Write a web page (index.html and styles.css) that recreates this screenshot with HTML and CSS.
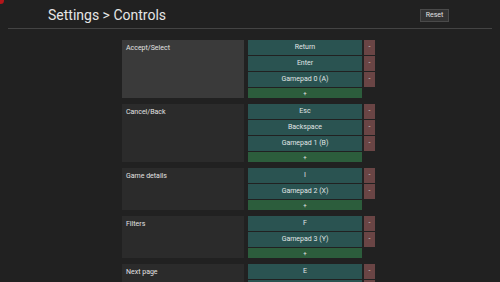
FILE: index.html
```html
<!DOCTYPE html>
<html>
<head>
<meta charset="utf-8">
<link rel="stylesheet" href="styles.css">
</head>
<body>
<div class="cursor-dot"></div>
<header class="header">
  <h1 class="title">Settings &gt; Controls</h1>
  <button class="reset">Reset</button>
</header>
<main class="list">
  <section class="row selected">
    <div class="label">Accept/Select</div>
    <div class="keys">
      <div class="bind"><div class="key">Return</div><div class="minus">-</div></div>
      <div class="bind"><div class="key">Enter</div><div class="minus">-</div></div>
      <div class="bind"><div class="key">Gamepad 0 (A)</div><div class="minus">-</div></div>
      <div class="bind"><div class="plus">+</div></div>
    </div>
  </section>
  <section class="row">
    <div class="label">Cancel/Back</div>
    <div class="keys">
      <div class="bind"><div class="key">Esc</div><div class="minus">-</div></div>
      <div class="bind"><div class="key">Backspace</div><div class="minus">-</div></div>
      <div class="bind"><div class="key">Gamepad 1 (B)</div><div class="minus">-</div></div>
      <div class="bind"><div class="plus">+</div></div>
    </div>
  </section>
  <section class="row">
    <div class="label">Game details</div>
    <div class="keys">
      <div class="bind"><div class="key">I</div><div class="minus">-</div></div>
      <div class="bind"><div class="key">Gamepad 2 (X)</div><div class="minus">-</div></div>
      <div class="bind"><div class="plus">+</div></div>
    </div>
  </section>
  <section class="row">
    <div class="label">Filters</div>
    <div class="keys">
      <div class="bind"><div class="key">F</div><div class="minus">-</div></div>
      <div class="bind"><div class="key">Gamepad 3 (Y)</div><div class="minus">-</div></div>
      <div class="bind"><div class="plus">+</div></div>
    </div>
  </section>
  <section class="row">
    <div class="label">Next page</div>
    <div class="keys">
      <div class="bind"><div class="key">E</div><div class="minus">-</div></div>
      <div class="bind"><div class="key"></div><div class="minus"></div></div>
    </div>
  </section>
</main>
</body>
</html>
```
FILE: styles.css
```css
html, body {
  margin: 0;
  padding: 0;
  background: #212121;
  color: #e2e2e2;
  font-family: Roboto, "Noto Sans", sans-serif;
}
body {
  position: relative;
  overflow: hidden;
  height: 282px;
}
.cursor-dot {
  position: absolute;
  left: -3px;
  top: -3px;
  width: 7px;
  height: 7px;
  border-radius: 50%;
  background: #b3161a;
}
.header {
  margin: 0 8px;
  height: 28px;
  border-bottom: 1px solid #444;
  display: flex;
  align-items: center;
  justify-content: space-between;
  padding: 0 43px 0 40px;
}
.title {
  margin: 0;
  font-size: 14px;
  font-weight: 400;
  line-height: 16px;
  color: #e6e6e6;
  padding-top: 1px;
}
.reset {
  font-family: Roboto, sans-serif;
  font-size: 7px;
  color: #e0e0e0;
  background: #333;
  border: 1px solid #4a4a4a;
  width: 29px;
  height: 13px;
  padding: 0;
  margin-top: 2px;
  line-height: 11px;
}
.list {
  width: 253px;
  margin: 11px 0 0 122px;
  display: flex;
  flex-direction: column;
  gap: 6px;
}
.row {
  display: flex;
  gap: 4px;
}
.label {
  width: 122px;
  flex: none;
  background: #2b2b2b;
  font-size: 7px;
  line-height: 8px;
  padding: 4px 4px 0;
  box-sizing: border-box;
}
.row.selected .label {
  background: #3a3a3a;
}
.keys {
  display: flex;
  flex-direction: column;
  gap: 1px;
}
.bind {
  display: flex;
  gap: 2px;
}
.key, .plus {
  width: 114px;
  height: 15px;
  background: #2a5351;
  font-size: 7px;
  line-height: 15px;
  text-align: center;
  color: #e0e6e6;
}
.plus {
  height: 10px;
  line-height: 10px;
  background: #2c5d3c;
  font-size: 6px;
}
.minus {
  width: 11px;
  height: 15px;
  background: #6a4545;
  font-size: 7px;
  line-height: 14px;
  text-align: center;
  color: #d8c8c8;
}
```
